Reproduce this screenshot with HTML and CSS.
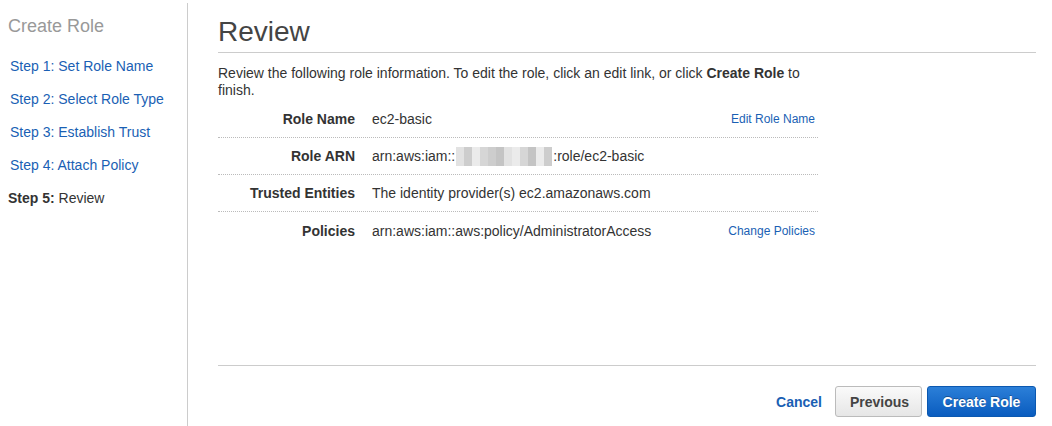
FILE: index.html
```html
<!DOCTYPE html>
<html>
<head>
<meta charset="utf-8">
<link rel="stylesheet" href="styles.css">
</head>
<body>
<div class="page">
  <nav class="sidebar">
    <div class="side-title">Create Role</div>
    <ul class="steps">
      <li><a href="#">Step 1: Set Role Name</a></li>
      <li><a href="#">Step 2: Select Role Type</a></li>
      <li><a href="#">Step 3: Establish Trust</a></li>
      <li><a href="#">Step 4: Attach Policy</a></li>
      <li class="current"><b>Step 5:</b> Review</li>
    </ul>
  </nav>
  <main class="main">
    <h1 class="title">Review</h1>
    <p class="intro">Review the following role information. To edit the role, click an edit link, or click <b>Create Role</b> to finish.</p>
    <div class="table">
      <div class="row">
        <div class="label">Role Name</div>
        <div class="value">ec2-basic</div>
        <a class="edit" href="#">Edit Role Name</a>
      </div>
      <div class="row">
        <div class="label">Role ARN</div>
        <div class="value">arn:aws:iam::<span class="blur"><i class="b1"></i><i class="b2"></i><i class="b3"></i><i class="b4"></i><i class="b2"></i><i class="b5"></i><i class="b1"></i><i class="b3"></i><i class="b4"></i><i class="b5"></i><i class="b3"></i><i class="b2"></i></span>:role/ec2-basic</div>
      </div>
      <div class="row">
        <div class="label">Trusted Entities</div>
        <div class="value">The identity provider(s) ec2.amazonaws.com</div>
      </div>
      <div class="row">
        <div class="label">Policies</div>
        <div class="value">arn:aws:iam::aws:policy/AdministratorAccess</div>
        <a class="edit" href="#">Change Policies</a>
      </div>
    </div>
    <div class="footer">
      <a class="cancel" href="#">Cancel</a>
      <button class="btn btn-default">Previous</button>
      <button class="btn btn-primary">Create Role</button>
    </div>
  </main>
</div>
</body>
</html>
```

FILE: styles.css
```css
* { box-sizing: border-box; }
html, body { margin: 0; padding: 0; background: #fff; }
body {
  font-family: "Liberation Sans", Arial, sans-serif;
  font-size: 14px;
  color: #333;
}
a { color: #1a5fb4; text-decoration: none; }
.page {
  display: flex;
  height: 426px;
}
.sidebar {
  width: 188px;
  flex: none;
  margin-top: 3px;
  border-right: 1px solid #ccc;
  padding-left: 8px;
}
.side-title {
  font-size: 18px;
  color: #999;
  line-height: 22px;
  margin-top: 12px;
}
.steps {
  list-style: none;
  margin: 0;
  padding: 0;
  margin-top: 21px;
}
.steps li {
  line-height: 17px;
  height: 33px;
  padding-left: 2px;
}
.steps li.current { padding-left: 0; color: #333; }
.steps li.current b { color: #333; }
.main {
  flex: 1;
  padding: 0 16px 0 30px;
  display: flex;
  flex-direction: column;
}
.title {
  margin: 15px 0 0;
  font-size: 28px;
  font-weight: normal;
  color: #444;
  line-height: 34px;
  padding-bottom: 3px;
  border-bottom: 1px solid #ccc;
}
.intro {
  margin: 12px 0 0;
  width: 600px;
  line-height: 17px;
}
.table {
  width: 600px;
  margin-top: 2px;
}
.row {
  display: flex;
  align-items: center;
  height: 37px;
  border-bottom: 1px dotted #bbb;
}
.row:last-child { border-bottom: none; }
.label {
  width: 137px;
  text-align: right;
  font-weight: bold;
  flex: none;
}
.value {
  margin-left: 17px;
  flex: 1;
  display: flex;
  align-items: center;
}
.edit {
  font-size: 12px;
  margin-right: 3px;
}
.blur {
  display: inline-flex;
  height: 19px;
  margin: 0 1px;
}
.blur i { width: 8px; height: 19px; display: block; }
.b1 { background: #e2e2e2; }
.b2 { background: #cdcdcd; }
.b3 { background: #ebebeb; }
.b4 { background: #d6d6d6; }
.b5 { background: #c4c4c4; }
.footer {
  margin-top: auto;
  border-top: 1px solid #ccc;
  display: flex;
  justify-content: flex-end;
  align-items: center;
  padding-top: 20px;
  padding-bottom: 9px;
}
.cancel {
  font-weight: bold;
  font-size: 14px;
  margin-right: 13px;
  color: #1a5fb4;
}
.btn {
  font-family: "Liberation Sans", Arial, sans-serif;
  font-size: 14px;
  font-weight: bold;
  height: 31px;
  border-radius: 3px;
  padding: 0 14px;
  cursor: pointer;
}
.btn-default {
  width: 87px;
  color: #444;
  background: linear-gradient(#fafafa, #e6e6e6);
  border: 1px solid #bbb;
  margin-right: 5px;
}
.btn-primary {
  width: 109px;
  color: #fff;
  background: linear-gradient(#2b7fd8, #0a5cbf);
  border: 1px solid #0b58b0;
  text-shadow: 0 -1px 0 rgba(0,0,0,0.3);
}
```
